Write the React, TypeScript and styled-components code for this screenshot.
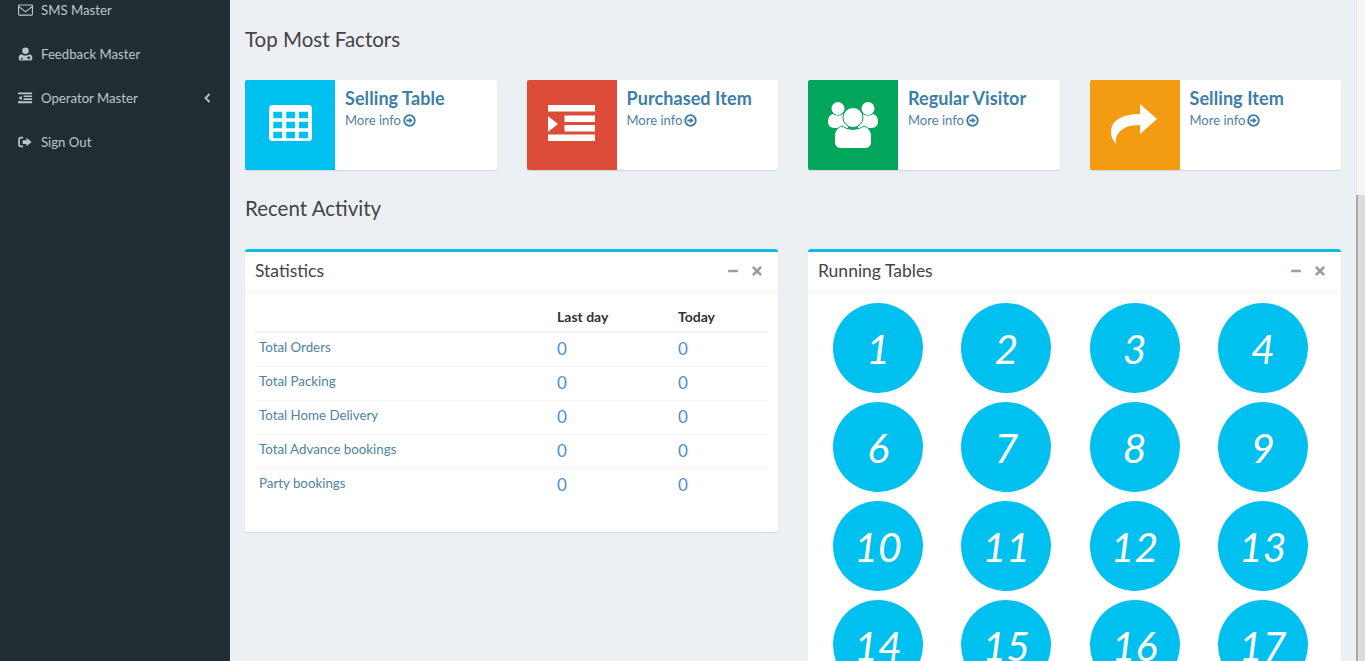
import React from "react";
import styled, { createGlobalStyle } from "styled-components";

const FONT = `"Lato", "Noto Sans", "Liberation Sans", sans-serif`;

const Global = createGlobalStyle`
  html, body { margin: 0; padding: 0; height: 661px; overflow: hidden; background: #ecf0f5; }
  #root { height: 661px; }
  * { box-sizing: border-box; }
`;

const Page = styled.div`
  display: flex;
  height: 661px;
  overflow: hidden;
  font-family: ${FONT};
  background: #ecf0f5;
`;

const Sidebar = styled.nav`
  width: 230px;
  flex: none;
  background: #222d32;
  margin-top: -12px;
  height: 673px;
`;

const NavItem = styled.div`
  height: 44px;
  display: flex;
  align-items: center;
  padding: 0 18px;
  color: #b8c7ce;
  font-size: 13.2px;
`;

const NavIcon = styled.svg`
  width: 15px;
  height: 14px;
  margin-right: 8px;
  flex: none;
  fill: #b8c7ce;
`;

const NavLabel = styled.span`
  flex: 1;
`;

const Main = styled.main`
  flex: 1;
  min-width: 0;
  padding: 0 15px;
`;

const ScrollTrack = styled.div`
  width: 9px;
  flex: none;
  background: #f5f5f5;
  border-left: 1px solid #e2e4e8;
  padding-top: 195px;
`;

const ScrollThumb = styled.div`
  height: 466px;
  margin-left: -1px;
  border-left: 2px solid #a9a9a9;
  background: #dcdcdc;
`;

const SectionTitle = styled.h2<{ $top: number; $bottom: number }>`
  margin: ${(p) => p.$top}px 0 ${(p) => p.$bottom}px;
  font-size: 20.5px;
  line-height: 24px;
  font-weight: 400;
  color: #444;
`;

const InfoGrid = styled.div`
  display: grid;
  grid-template-columns: repeat(4, 1fr);
  gap: 30px;
`;

const InfoBox = styled.div`
  height: 90px;
  display: flex;
  background: #fff;
  border-radius: 2px;
  box-shadow: 0 1px 1px rgba(0, 0, 0, 0.1);
`;

const InfoIcon = styled.div<{ $bg: string; $lift: number }>`
  width: 90px;
  flex: none;
  display: flex;
  align-items: center;
  justify-content: center;
  padding-bottom: ${(p) => p.$lift}px;
  background: ${(p) => p.$bg};
  border-radius: 2px 0 0 2px;
`;

const InfoBody = styled.div`
  padding: 6px 10px;
`;

const InfoTitle = styled.div`
  font-size: 18px;
  line-height: 24px;
  font-weight: 700;
  letter-spacing: 0.08px;
  color: #3c7ea6;
`;

const InfoLink = styled.div`
  font-size: 13px;
  line-height: 20px;
  color: #4f82a3;
  display: flex;
  align-items: center;
  gap: 2px;
`;

const PanelRow = styled.div`
  display: grid;
  grid-template-columns: 1fr 1fr;
  gap: 30px;
  align-items: start;
`;

const Panel = styled.section`
  background: #fff;
  border-top: 3px solid #0abde6;
  border-radius: 3px;
  box-shadow: 0 1px 1px rgba(0, 0, 0, 0.1);
`;

const PanelHead = styled.header`
  height: 41px;
  display: flex;
  align-items: center;
  justify-content: space-between;
  padding: 0 16px 4px 10px;
  border-bottom: 1px solid #f4f4f4;
`;

const PanelTitle = styled.h3`
  margin: 0;
  font-size: 17.5px;
  font-weight: 400;
  color: #444;
`;

const PanelTools = styled.div`
  display: flex;
  gap: 14px;
  align-items: center;
  margin-top: 2px;
`;

const ToolIcon = styled.svg`
  width: 10px;
  height: 10px;
  fill: #97a0a8;
`;

const StatsBody = styled.div`
  padding: 10px 10px 30px;
`;

const StatsTable = styled.table`
  width: 100%;
  border-collapse: collapse;
  table-layout: fixed;
`;

const HeadCell = styled.th<{ $w?: number }>`
  width: ${(p) => (p.$w ? `${p.$w}px` : "auto")};
  height: 29px;
  padding: 0 4px 2px;
  text-align: left;
  font-size: 14px;
  font-weight: 700;
  color: #333;
  border-bottom: 2px solid #f4f4f4;
`;

const LabelCell = styled.td`
  height: 34px;
  padding: 0 4px 5px;
  font-size: 13.3px;
  color: #4f82a3;
  border-bottom: 1px solid #f4f4f4;
`;

const ValueCell = styled.td`
  height: 34px;
  padding: 0 4px 1px;
  font-size: 17px;
  color: #4a90d0;
  border-bottom: 1px solid #f4f4f4;
`;

const LastRow = styled.tr`
  td { border-bottom: none; }
`;

const TablesBody = styled.div`
  display: grid;
  grid-template-columns: repeat(4, 128.25px);
  row-gap: 9px;
  padding: 10px 0 20px 6px;
`;

const Circle = styled.div`
  width: 90px;
  height: 90px;
  justify-self: center;
  border-radius: 50%;
  background: #00c0ef;
  color: #fff;
  display: flex;
  align-items: center;
  justify-content: center;
  font-size: 41px;
  font-style: italic;
`;

const Envelope = () => (
  <NavIcon viewBox="0 0 16 14"><path fillRule="evenodd" d="M1.500 1h13A1.500 1.500 0 0 1 16 2.500v9a1.500 1.500 0 0 1-1.500 1.500h-13A1.500 1.500 0 0 1 0 11.500v-9A1.500 1.500 0 0 1 1.500 1zm0 1.200a.4.4 0 0 0-.3.6L8 8.200l6.800-5.400a.4.4 0 0 0-.3-.6zM1.200 4.300v7.200c0 .2.100.3.300.3h13c.200 0 .300-.100.300-.300V4.300L8 9.700z" /></NavIcon>
);
const UserMd = () => (
  <NavIcon viewBox="0 0 16 14"><path fillRule="evenodd" d="M8 0a3.500 3.500 0 1 1 0 7 3.500 3.500 0 0 1 0-7zM3.500 7.200c1 .8 2.800 1.300 4.500 1.300s3.500-.5 4.500-1.300c2 .3 2.800 2 2.800 4.300 0 1.500-1 2.500-2.300 2.500H3c-1.300 0-2.300-1-2.300-2.500 0-2.300.8-4 2.800-4.300zM4 11a1 1 0 1 0 0 2 1 1 0 0 0 0-2zm7-2v1.500h-1.500v1H11V13h1v-1.500h1.500v-1H12V9z" /></NavIcon>
);
const Outdent = () => (
  <NavIcon viewBox="0 0 16 14"><path d="M0 1h15v2H0zM6 4.200h9v1.800H6zM6 7.300h9v1.800H6zM0 10.500h15v2H0zM4 4.500v5L.5 7z" /></NavIcon>
);
const SignOut = () => (
  <NavIcon viewBox="0 0 16 14"><path d="M5.500 1.500v1.700H3a1 1 0 0 0-1 1v5.600a1 1 0 0 0 1 1h2.500v1.700H3A2.800 2.800 0 0 1 .2 9.800V4.200A2.800 2.800 0 0 1 3 1.500zM9 2.500l5.500 4.500L9 11.500V9H5V5h4z" /></NavIcon>
);
const ChevronLeft = styled.svg`
  width: 7px;
  height: 10px;
  margin-right: 1px;
  fill: none;
  stroke: #b8c7ce;
  stroke-width: 1.800;
`;
const MoreArrow = () => (
  <svg width="13" height="13" viewBox="0 0 13 13"><circle cx="6.500" cy="6.500" r="5.300" fill="none" stroke="#3c7ea6" strokeWidth="1.800" /><path d="M3.300 5.500h3V3.500l3.300 3-3.300 3v-2h-3z" fill="#3c7ea6" /></svg>
);
const TableIcon = () => (
  <svg width="43" height="36" viewBox="0 0 43 36"><path fill="#fff" fillRule="evenodd" d="M3.500 0h36A3.500 3.500 0 0 1 43 3.500v29a3.500 3.500 0 0 1-3.500 3.500h-36A3.500 3.500 0 0 1 0 32.500v-29A3.500 3.500 0 0 1 3.500 0zM4.300 6.700v6.600H13V6.700zm13 0v6.600H26V6.700zm12.700 0v6.600h9V6.700zM4.300 16.700v6.600H13v-6.600zm13 0v6.600H26v-6.600zm12.700 0v6.600h9v-6.600zM4.300 26.700v6.600H13v-6.600zm13 0v6.600H26v-6.600zm12.700 0v6.600h9v-6.600z" /></svg>
);
const IndentIcon = () => (
  <svg width="47" height="36" viewBox="0 0 47 36"><path fill="#fff" d="M0 0h47v6.500H0zM16.500 10.500H47v6.500H16.500zM16.500 20H47v6.500H16.500zM0 29.500h47V36H0zM0 11l10 8-10 8z" /></svg>
);
const UsersIcon = () => (
  <svg width="50" height="46" viewBox="0 0 50 46">
    <g fill="#fff">
      <circle cx="10" cy="6.500" r="6.500" />
      <circle cx="40" cy="6.500" r="6.500" />
      <path d="M5 12c1.500 1 3 1.500 5 1.500s3.500-.5 5-1.500h5v14h-13C3 26 0 24 0 19.500 0 15.500 1.500 13 5 12z" />
      <path d="M45 12c-1.500 1-3 1.500-5 1.500s-3.500-.5-5-1.500h-5v14h13c4 0 7-2 7-6.500 0-4-1.500-6.500-5-7.500z" />
    </g>
    <g fill="#fff" stroke="#00a65a" strokeWidth="1">
      <path d="M14 24c3 2.200 6.800 3.300 11 3.300S33 26.200 36 24c4.500 1.500 7.500 5 7.500 10v6c0 3.500-2.500 6.500-6 6.500h-25c-3.500 0-6-3-6-6.500v-6c0-5 3-8.500 7.500-10z" />
      <circle cx="25" cy="15.500" r="10" />
    </g>
  </svg>
);
const ShareIcon = () => (
  <svg width="47" height="40" viewBox="0 0 47 40"><path fill="#fff" d="M46 15 29 0v10C12 10 0 16 0 28c0 5 2 9 5 12-1-8 3-19 24-19v9z" /></svg>
);

const boxes = [
  { title: "Selling Table", bg: "#00c0ef", lift: 4, icon: <TableIcon /> },
  { title: "Purchased Item", bg: "#dd4b39", lift: 4, icon: <IndentIcon /> },
  { title: "Regular Visitor", bg: "#00a65a", lift: 0, icon: <UsersIcon /> },
  { title: "Selling Item", bg: "#f39c12", lift: 2, icon: <ShareIcon /> },
];
const stats = ["Total Orders", "Total Packing", "Total Home Delivery", "Total Advance bookings"];
const tables = [1, 2, 3, 4, 6, 7, 8, 9, 10, 11, 12, 13, 14, 15, 16, 17];

const Tools = () => (
  <PanelTools>
    <ToolIcon viewBox="0 0 11 11"><rect x="0" y="4" width="11" height="3" rx="1" /></ToolIcon>
    <ToolIcon viewBox="0 0 11 11"><path d="M1.800 0 5.500 3.300 9.200 0 11 1.800 7.700 5.500 11 9.200 9.200 11 5.500 7.700 1.800 11 0 9.200 3.300 5.500 0 1.800z" /></ToolIcon>
  </PanelTools>
);

export default function App() {
  return (
    <Page>
      <Global />
      <Sidebar>
        <NavItem><Envelope /><NavLabel>SMS Master</NavLabel></NavItem>
        <NavItem><UserMd /><NavLabel>Feedback Master</NavLabel></NavItem>
        <NavItem>
          <Outdent /><NavLabel>Operator Master</NavLabel>
          <ChevronLeft viewBox="0 0 7 10"><path d="M5.500 1 1.500 5l4 4" /></ChevronLeft>
        </NavItem>
        <NavItem><SignOut /><NavLabel>Sign Out</NavLabel></NavItem>
      </Sidebar>
      <Main>
        <SectionTitle $top={27} $bottom={29}>Top Most Factors</SectionTitle>
        <InfoGrid>
          {boxes.map((b) => (
            <InfoBox key={b.title}>
              <InfoIcon $bg={b.bg} $lift={b.lift}>{b.icon}</InfoIcon>
              <InfoBody>
                <InfoTitle>{b.title}</InfoTitle>
                <InfoLink>More info <MoreArrow /></InfoLink>
              </InfoBody>
            </InfoBox>
          ))}
        </InfoGrid>
        <SectionTitle $top={26} $bottom={29}>Recent Activity</SectionTitle>
        <PanelRow>
          <Panel>
            <PanelHead><PanelTitle>Statistics</PanelTitle><Tools /></PanelHead>
            <StatsBody>
              <StatsTable>
                <thead>
                  <tr>
                    <HeadCell $w={298} />
                    <HeadCell $w={121}>Last day</HeadCell>
                    <HeadCell>Today</HeadCell>
                  </tr>
                </thead>
                <tbody>
                  {stats.map((s) => (
                    <tr key={s}><LabelCell>{s}</LabelCell><ValueCell>0</ValueCell><ValueCell>0</ValueCell></tr>
                  ))}
                  <LastRow><LabelCell>Party bookings</LabelCell><ValueCell>0</ValueCell><ValueCell>0</ValueCell></LastRow>
                </tbody>
              </StatsTable>
            </StatsBody>
          </Panel>
          <Panel>
            <PanelHead><PanelTitle>Running Tables</PanelTitle><Tools /></PanelHead>
            <TablesBody>
              {tables.map((n) => <Circle key={n}>{n}</Circle>)}
            </TablesBody>
          </Panel>
        </PanelRow>
      </Main>
      <ScrollTrack><ScrollThumb /></ScrollTrack>
    </Page>
  );
}
